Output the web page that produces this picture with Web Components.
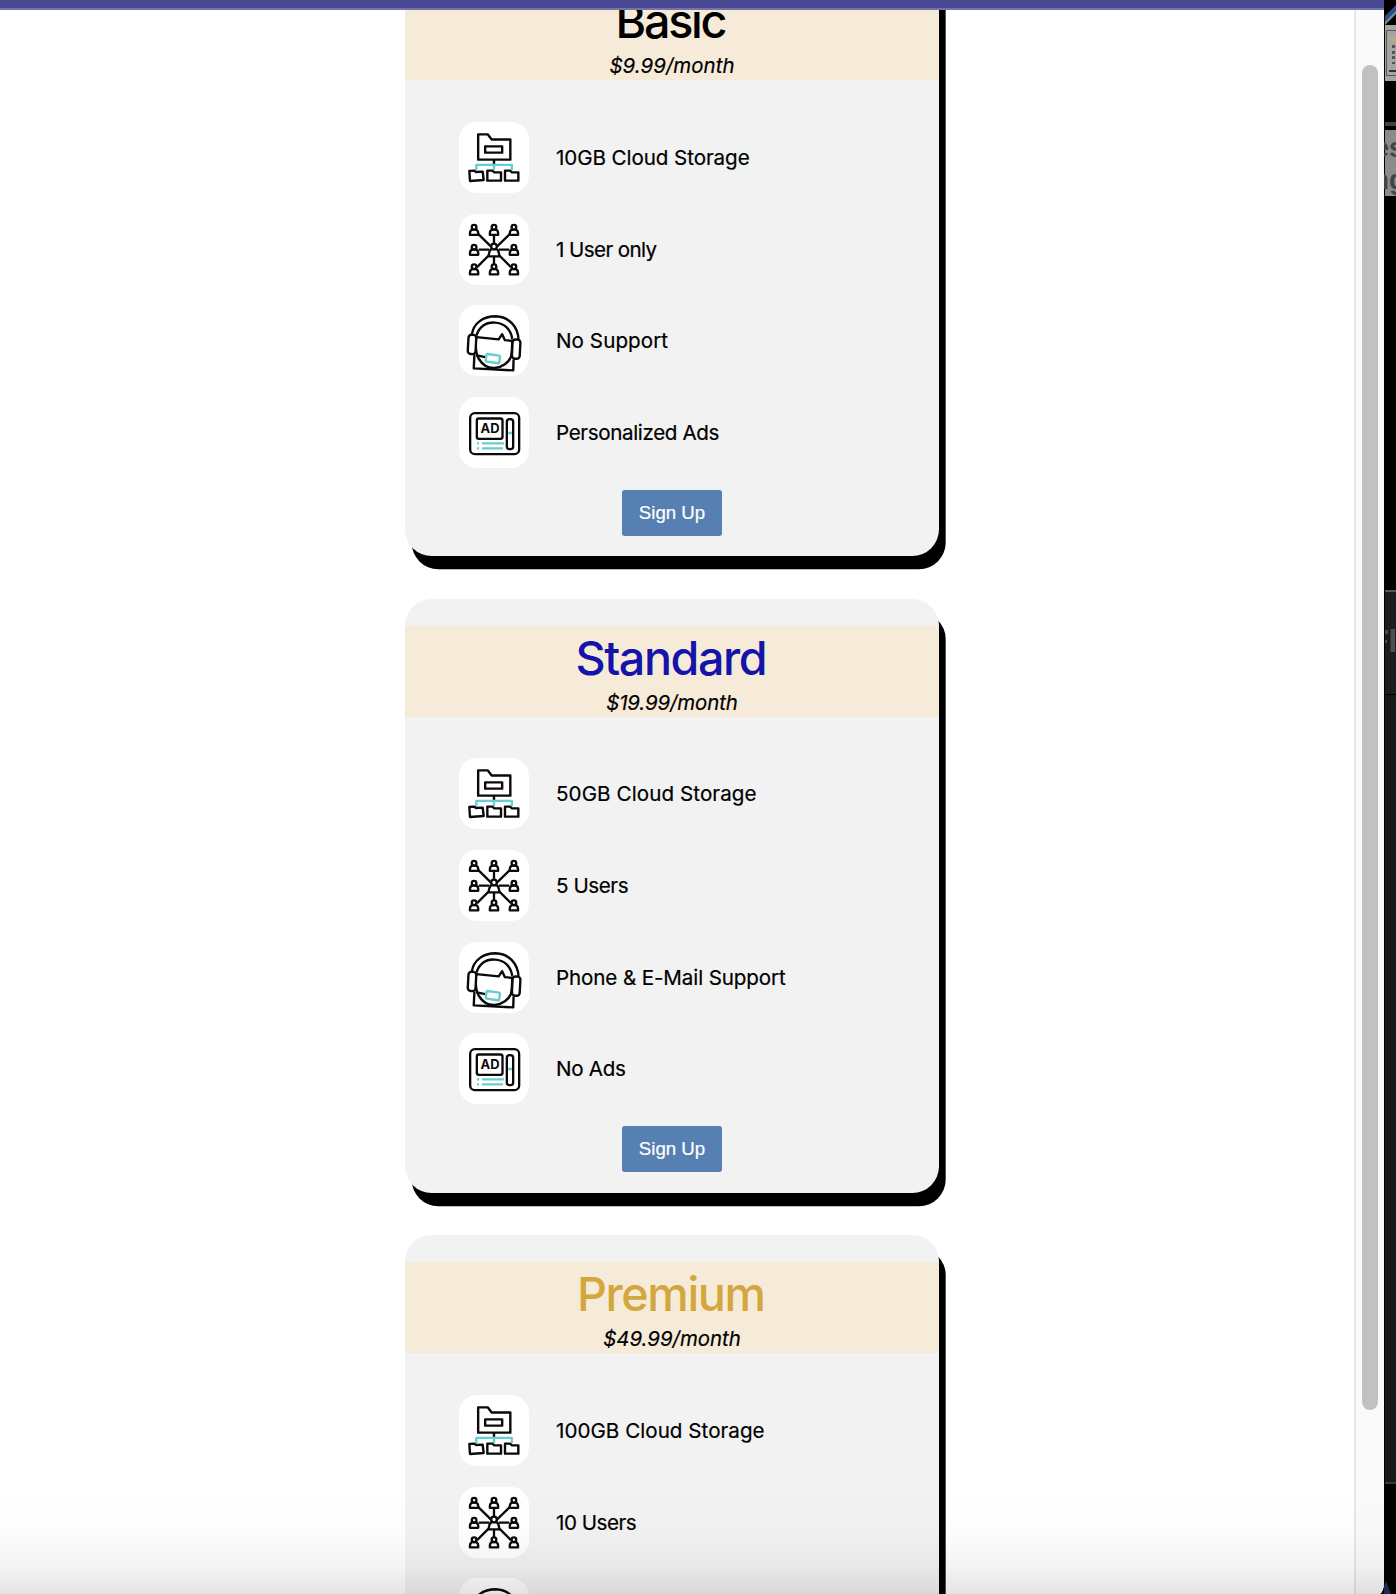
<!DOCTYPE html>
<html lang="en">
<head>
<meta charset="utf-8">
<title>Pricing</title>
<style>
html,body{margin:0;height:1594px;overflow:hidden;background:#000}
</style>
</head>
<body>
<desktop-scene>
  <browser-window>
    <price-card name="Basic" name-width="109" price="$9.99/month" price-width="124.5">
      <plan-feature icon="storage" width="193">10GB Cloud Storage</plan-feature>
      <plan-feature icon="users" width="100">1 User only</plan-feature>
      <plan-feature icon="support" width="111.5">No Support</plan-feature>
      <plan-feature icon="ads" width="162.5">Personalized Ads</plan-feature>
    </price-card>
    <price-card name="Standard" name-width="190" price="$19.99/month" price-width="131" style="--name:#1414aa">
      <plan-feature icon="storage" width="200">50GB Cloud Storage</plan-feature>
      <plan-feature icon="users" width="71.5">5 Users</plan-feature>
      <plan-feature icon="support" width="229">Phone &amp; E-Mail Support</plan-feature>
      <plan-feature icon="ads" width="69">No Ads</plan-feature>
    </price-card>
    <price-card name="Premium" name-width="187" price="$49.99/month" price-width="137" no-button style="--name:#d4a73e">
      <plan-feature icon="storage" width="208">100GB Cloud Storage</plan-feature>
      <plan-feature icon="users" width="79.5">10 Users</plan-feature>
      <plan-feature icon="support"></plan-feature>
    </price-card>
  </browser-window>
</desktop-scene>
<script>
const make = (el, html) => { el.attachShadow({mode:'open'}).innerHTML = html; return el.shadowRoot; };

/* Line of text tracked so that it spans a given width. */
class FitText extends HTMLElement {
  connectedCallback() {
    make(this, '<style>:host{display:inline-block;white-space:nowrap}</style><slot></slot>');
    const want = parseFloat(this.getAttribute('width'));
    const n = this.textContent.length;
    if (!n || !want) return;
    const space = (want + 0.6 - this.getBoundingClientRect().width) / n;
    this.style.letterSpacing = space.toFixed(3) + 'px';
    this.style.marginRight = (-space).toFixed(3) + 'px';
  }
}

const ICONS = {
  storage: `<svg viewBox="27 21 210 213" fill="none" stroke="#0a0a0a" stroke-width="7.200" stroke-linejoin="round">
    <path d="M132 135v14" /><path d="M79 165V149.500H185.500V165M132 149v16" stroke="#66cdd0"/>
    <path d="M84.500 58H113L125 73.500H181V134H84.500Z"/><rect x="105.500" y="94" width="51" height="19"/>
    <path d="M58 168l15-1 5 4 20-1 3 25-41 3ZM112 167h15l6 5h20v25h-41ZM165 167h15l6 5h19v25h-40Z"/></svg>`,
  users: `<svg viewBox="27 24 210 214" fill="none" stroke="#0a0a0a" stroke-width="7" stroke-linejoin="round">
    <path d="M81 81l43 42M183 81l-43 42M81 184l43-43M183 184l-43-43M132 88v27M132 152v24M86 131.500h32M146 131.500h32"/>
    ${[72,132,192].flatMap(x => [72,132,191].map(y => x === 132 && y === 132 ? '' :
      `<g transform="translate(${x} ${y})"><path d="M-12.500 15V10Q-12 0-5-1H5Q12 0 12.500 10V15Z" fill="#fff"/><circle cy="-8" r="7" fill="#fff"/></g>`)).join('')}
    <path d="M116 151.500Q117 133 125 130h14q8 3 9 21.500Z" fill="#fff"/><circle cx="132" cy="122" r="8.500" fill="#fff"/></svg>`,
  support: `<svg viewBox="27 24 210 214" fill="none" stroke="#0a0a0a" stroke-width="7.200" stroke-linejoin="round">
    <path d="M65 114C70 78 100 58 137 58C176 59 205 88 206 130M79 116C88 90 108 76 134 77C164 78 183 98 187 126"/>
    <path d="M79 121L146 127.500L156.500 112L165 130L187 132M78 120C76 145 76 170 86 186C99 207 115 215 134 214C158 212 176 197 183 181C187 164 187 148 187 128"/>
    <path d="M73 173L71 215L190 221L191 188M79 176L106 181"/>
    <rect x="54" y="114" width="23.500" height="58" rx="9" transform="rotate(3 66 143)" fill="#fff"/>
    <rect x="187" y="128" width="23.500" height="58" rx="9" transform="rotate(3 198 157)" fill="#fff"/>
    <rect x="108" y="174" width="41" height="23" rx="3" transform="rotate(8 128 186)" stroke="#66cdd0" fill="#fff"/></svg>`,
  ads: `<svg viewBox="27 20 210 213" fill="none" stroke="#0a0a0a" stroke-width="7">
    <rect x="60.500" y="68.500" width="147" height="123" rx="14"/><rect x="80.500" y="84.500" width="77" height="61" rx="6"/>
    <path d="M81 159h6M96 159h66M81 174h6M96 174h63" stroke="#66cdd0"/>
    <rect x="170.500" y="86.500" width="19" height="90" rx="8"/><path d="M174 128h12" stroke="#66cdd0"/>
    <text x="91.500" y="129" textLength="57" lengthAdjust="spacingAndGlyphs" fill="#0a0a0a" stroke="none" font-family="Inter,sans-serif" font-weight="700" font-size="38">AD</text></svg>`
};

class PlanFeature extends HTMLElement {
  connectedCallback() {
    const text = this.innerHTML.trim();
    make(this, `<style>
      :host{display:flex;align-items:center;gap:27px;height:71px}
      .tile{flex:none;width:70px;height:71px;border-radius:18px;background:#fff;overflow:hidden}
      svg{display:block;width:70px;height:71px}
      fit-text{font:400 20.600px/26px Inter,sans-serif;color:#000;padding-top:1px;-webkit-text-stroke:.2px #000}
      </style><div class="tile">${ICONS[this.getAttribute('icon')]}</div>
      ${text ? `<fit-text width="${this.getAttribute('width')}">${text}</fit-text>` : ''}`);
  }
}

class SignUpButton extends HTMLElement {
  connectedCallback() {
    make(this, `<style>:host{display:block}
      button{display:block;width:100px;height:46px;margin:0;padding:0;border:0;border-radius:2.700px;background:#5680b1;color:#fff;font:18.670px "Liberation Sans",sans-serif;-webkit-text-stroke:.2px #fff}
      </style><button><slot></slot></button>`);
  }
}

class PriceCard extends HTMLElement {
  connectedCallback() {
    const a = n => this.getAttribute(n);
    make(this, `<style>
      :host{box-sizing:border-box;flex:none;display:flex;flex-direction:column;width:534px;height:594px;padding-top:27px;border-radius:26.670px;background:#f2f2f2;box-shadow:6.670px 13.330px #000}
      header{display:flex;flex-direction:column;align-items:center;height:91px;background:#f6ebd9}
      .name{font:500 46.700px/56px Inter,sans-serif;color:var(--name,#000);margin:4px 0 0 -1px;height:56px}
      .price{font:italic 400 20.400px/26px Inter,sans-serif;color:#000;margin-top:4px;-webkit-text-stroke:.2px #000}
      .list{box-sizing:border-box;display:flex;flex-direction:column;gap:20.600px;height:387.500px;padding:41.500px 0 0 54px}
      footer{display:flex;justify-content:center;margin-top:22px}
      </style>
      <header><fit-text class="name" width="${a('name-width')}">${a('name')}</fit-text>
      <fit-text class="price" width="${a('price-width')}">${a('price')}</fit-text></header>
      <div class="list"><slot></slot></div>
      ${this.hasAttribute('no-button') ? '' : '<footer><sign-up-button>Sign Up</sign-up-button></footer>'}`);
  }
}

class ScrollTrack extends HTMLElement {
  connectedCallback() {
    make(this, `<style>:host{display:flex;box-sizing:border-box;width:30px;flex:none;padding:55px 0 0 6px;border-left:2px solid #e7e7e7;background:#fafafa}
      i{width:16px;height:1345px;border-radius:8px;background:#c1c1c1}</style><i></i>`);
  }
}

class BrowserWindow extends HTMLElement {
  connectedCallback() {
    make(this, `<style>
      :host{display:flex;flex-direction:column;position:relative;flex:none;width:1384px;height:1594px;overflow:hidden;background:#fff;border-bottom-right-radius:5px 12px}
      .bar{flex:none;box-sizing:border-box;height:10px;background:#4a4993;border-bottom:2px solid #7673ab}
      .body{display:flex;flex:1;min-height:0}
      main{flex:1;min-width:0;overflow:hidden}
      .cards{display:flex;flex-direction:column;gap:42.500px;margin:-47.600px 0 0 405px}
      .shade{position:absolute;left:0;right:0;bottom:0;height:110px;pointer-events:none;background:linear-gradient(rgba(0,0,0,0),rgba(0,0,0,.012) 45%,rgba(0,0,0,.045) 75%,rgba(0,0,0,.105))}
      </style><div class="bar"></div><div class="body"><main><div class="cards"><slot></slot></div></main><scroll-track></scroll-track></div><div class="shade"></div>`);
  }
}

class DesktopEdge extends HTMLElement {
  connectedCallback() {
    make(this, `<style>:host{display:block;flex:none;width:12px;height:1594px;background:#000}svg{display:block}</style>
      <svg width="12" height="1594" viewBox="1384 0 12 1594">
      <path d="M1385 16L1396 5V12L1385 24Z" fill="#2c4f83"/><path d="M1385 22L1396 11V14L1385 25Z" fill="#7d8c9f"/>
      <path d="M1385 25h11v56h-11z" fill="#a4a4a1"/><path d="M1396 30.500h-9.500V75.500H1396" fill="none" stroke="#555"/>
      <path d="M1389 37h7v5h-7z" fill="#b9a78a"/><path d="M1392 45h3v3h-3zM1392 51h3v3h-3zM1392 56h3v3h-3zM1392 62h3v2h-3z" fill="#555"/><path d="M1389 70h7v2h-7z" fill="#333"/>
      <path d="M1385 122h11v4h-11z" fill="#414141"/><path d="M1385 130h11v66h-11z" fill="#8b8b8b"/>
      <g font-family="Liberation Sans,sans-serif" font-weight="700" font-size="27" fill="#444"><text x="1374" y="156.500">es</text><text x="1372.500" y="189">ng</text></g>
      <path d="M1385 590h11v2h-11z" fill="#55585a"/><path d="M1385 592h11v102h-11z" fill="#1b1d1f"/>
      <path d="M1385 630h3v4h-3zM1385 640h2v3h-2zM1390.500 629h4.500v23h-4.500z" fill="#4b4d4e"/>
      <path d="M1385 695h11v787h-11z" fill="#15191a"/><path d="M1385 1482h11v2h-11z" fill="#343837"/>
      <path d="M1384 1594V1586L1386 1581L1391 1594Z" fill="#1d2c4d"/></svg>`);
  }
}

class DesktopScene extends HTMLElement {
  connectedCallback() {
    make(this, `<style>:host{display:flex;width:1396px;height:1594px;overflow:hidden;background:#000}</style><slot></slot><desktop-edge></desktop-edge>`);
  }
}

customElements.define('fit-text', FitText);
customElements.define('scroll-track', ScrollTrack);
customElements.define('desktop-edge', DesktopEdge);
customElements.define('desktop-scene', DesktopScene);
customElements.define('browser-window', BrowserWindow);
customElements.define('sign-up-button', SignUpButton);
customElements.define('price-card', PriceCard);
customElements.define('plan-feature', PlanFeature);
</script>
</body>
</html>
